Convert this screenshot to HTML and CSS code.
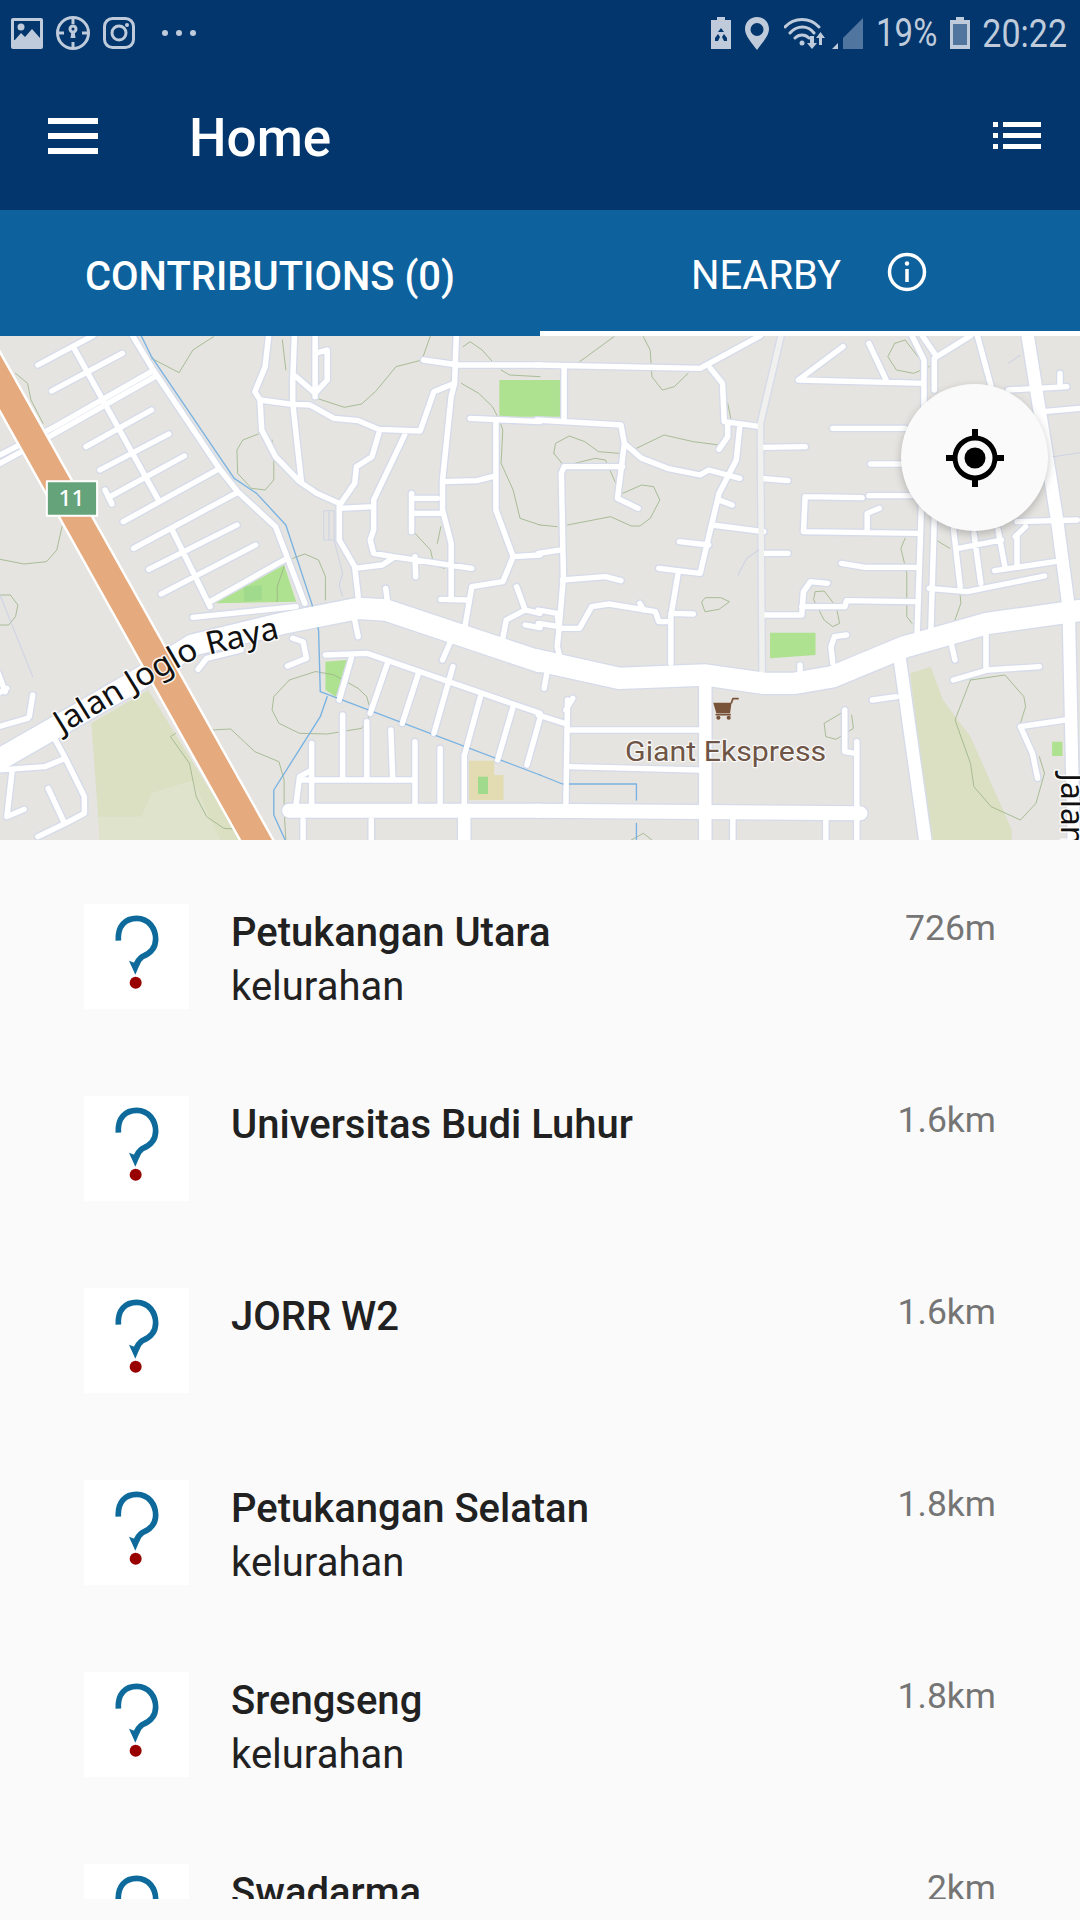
FILE: index.html
```html
<!DOCTYPE html>
<html lang="id">
<head>
<meta charset="utf-8">
<title>Home</title>
<link rel="stylesheet" href="styles.css">
</head>
<body>
<svg class="defs" width="0" height="0" aria-hidden="true">
  <symbol id="q" viewBox="0 0 315 315">
    <path class="q-arc" d="M103 110C100 65 125 43 158 43C195 43 215 75 215 105C215 135 195 150 175 158C165 165 160 172 156 185"/>
    <path class="q-head" d="M154 212L135 170L153 177L175 163Z"/>
    <circle class="q-dot" cx="155" cy="236" r="18"/>
  </symbol>
</svg>

<header class="appbar">
  <div class="status">
    <div class="status-left">
      <svg class="st" width="32" height="31" viewBox="0 0 32 31"><rect class="st-fill" x="0" y="0" width="32" height="31" rx="2"/><rect class="st-cut" x="3" y="3" width="26" height="19"/><circle class="st-fill" cx="10" cy="9" r="3.5"/><path class="st-fill" d="M3 23L10 15L14 19L21 11L29 20V27H3Z"/></svg>
      <svg class="st" width="34" height="34" viewBox="0 0 34 34"><circle class="st-line" cx="17" cy="17" r="15.5"/><path class="st-line" d="M17 1V8M17 26V33M1 17H8M26 17H33"/><circle class="st-line" cx="17" cy="13" r="3"/><path class="st-fill" d="M15.5 15H18.5L19.5 22H14.5Z"/></svg>
      <svg class="st" width="32" height="32" viewBox="0 0 32 32"><rect class="st-line" x="1.5" y="1.5" width="29" height="29" rx="8"/><circle class="st-line" cx="16" cy="16" r="7"/><circle class="st-fill" cx="24" cy="8" r="2"/></svg>
      <div class="dots"><i></i><i></i><i></i></div>
    </div>
    <div class="status-right">
      <svg class="st" width="22" height="32" viewBox="0 0 22 32"><path class="st-fill" d="M7 0H15V3H21V32H1V3H7Z"/><path class="st-dark" d="M11 11L14 15H8ZM5 21L8 17L10 20L8 24H5ZM17 21L14 17L12 20L14 24H17Z"/></svg>
      <svg class="st st-pin" width="24" height="33" viewBox="0 0 24 33"><path class="st-fill" fill-rule="evenodd" d="M12 0C5 0 0 5 0 12C0 19 7 26 12 33C17 26 24 19 24 12C24 5 19 0 12 0ZM12 6A6.500 6.500 0 1 1 12 19A6.500 6.500 0 1 1 12 6Z"/></svg>
      <svg class="st st-wifi" width="42" height="33" viewBox="0 0 42 33"><path class="st-line st-thin" d="M1 10C10 0 26 0 35 10M6 16C13 8 24 8 30 16M11 21C15 17 21 17 25 21"/><circle class="st-fill" cx="18" cy="26" r="2.500"/><path class="st-fill" d="M26 19H30V26H33L28 32L23 26H26ZM35 28H38V21H41L36.500 15L32 21H35Z"/></svg>
      <svg class="st st-sig" width="32" height="32" viewBox="0 0 32 32"><path class="st-fill" d="M0 32L6 26V32Z"/><path class="st-dim" d="M11 32V21L31 1V32Z"/></svg>
      <span class="pct">19%</span>
      <svg class="st st-bat" width="22" height="32" viewBox="0 0 22 32"><path class="st-fill" d="M7 0H15V3H21V32H1V3H7Z"/><rect class="st-dim" x="4" y="7" width="14" height="21"/></svg>
      <span class="clock">20:22</span>
    </div>
  </div>
  <div class="toolbar">
    <div class="burger"><i></i><i></i><i></i></div>
    <h1 class="title">Home</h1>
    <svg class="listicon" width="48" height="28" viewBox="0 0 48 28"><path d="M0 0H5V5H0ZM10 0H48V5H10ZM0 11H5V16H0ZM10 11H48V16H10ZM0 22H5V27H0ZM10 22H48V27H10Z"/></svg>
  </div>
</header>

<nav class="tabs">
  <div class="tab">CONTRIBUTIONS (0)</div>
  <div class="tab tab-active">NEARBY
    <svg class="info" width="40" height="40" viewBox="0 0 40 40"><circle cx="20" cy="20" r="17.500"/><path d="M20 17V30"/><circle class="info-dot" cx="20" cy="11.500" r="2.200"/></svg>
  </div>
</nav>

<section class="map">
  <svg class="mapsvg" viewBox="0 18 3136 1512" preserveAspectRatio="none">
    <defs>
      <g id="thin">
        <path d="M385 17L445 120L640 420L690 485L800 590L885 820M110 105L270 17M150 183L355 70M0 375L160 290L440 125M0 400L160 310L450 140M250 350L440 240M290 420L490 312M320 500L535 378M358 575L630 420M388 655L690 487M432 718L688 585M468 792L742 645M610 815L825 690M215 55L460 510M500 600L610 830M305 480L325 522"/>
        <path d="M780 17L770 110L740 185L755 210L760 300L800 380L870 455L920 490L985 520L985 630L1030 710L1040 800M855 17L850 150L850 220L875 455M915 17V200M915 190L860 140M915 70L950 60V150L915 190M755 210L840 222L900 225L970 265L1040 272L1100 298L1220 303L1260 185L1320 160L1325 17M1230 90L1330 105H1568M1365 265L1568 275M1320 160L1310 200L1285 450V540L1310 640V800M1285 455L1385 452L1430 440M1440 280V540L1490 680L1568 675M1490 680L1460 755L1370 770L1350 890M1100 310L1080 380L1035 410L1030 460L990 520M1175 315L1085 510V600L1075 630L1085 670L1140 680L1370 715M985 535L1085 530M1195 490V605M1195 505H1270M1195 550H1285M1030 715L1110 705L1140 685M1205 680L1207 740M1120 775L1125 815M1280 808L1360 810M1500 770L1525 840L1470 870L1460 925M1525 840L1568 850M1525 885L1568 893M1030 870L1040 920M1310 930L1285 990"/>
        <path d="M945 975L1065 970L1568 1150M1020 985L985 1110M1125 1000L1075 1150M1215 1030L1168 1180M1315 1010L1260 1210M1395 1100L1350 1270M1490 1130L1445 1290M1568 1165L1530 1305M995 1155V1340M1065 1175V1340M1135 1200L1140 1340M1205 1235V1420M1278 1255V1420M1348 1275V1420M905 1240V1420M860 1420L870 1340L905 1320M870 1350H1205M1078 1470V1530M880 1470V1530M560 862L860 830M850 925L880 935L890 985L835 1008M575 1018L600 985L700 960"/>
        <path d="M-5 1320L130 1310L190 1285M150 1210L190 1285L245 1400V1450L190 1480L110 1520M140 1375L185 1475M35 1325L20 1460L70 1438M95 1095L85 1160M-5 1190L80 1165M-5 1090L20 1075M-5 1030L15 1085"/>
        <g transform="translate(1568 0)">
          <path d="M-10 105L465 115L640 17M70 115V265M-10 270L235 285L245 340L225 505L285 535M250 345L295 385L370 415L465 435L490 420L580 445M495 115L530 160L535 275L640 290M545 285V320L520 358M580 290L570 390L520 490L490 620L465 730L345 715M520 510L558 525M500 585L650 605M405 635L490 645M70 410H240M70 410L62 430L68 740L55 900L50 950L60 990M-5 670L60 660M65 750L190 740L235 752M400 735L380 860V1000M-5 840L50 850L55 895H115L150 830L200 822L335 845L345 875H380M380 850L445 852M290 820L300 840M-5 880L55 890"/>
          <path d="M640 352L770 350M640 445L720 452M645 670H720M645 855H760L765 785L785 755L835 760M760 830H885L890 812L1090 815M880 50L750 150L1115 160M955 40L1005 150M1080 17L1115 90V300L1095 910M1145 85V180M1145 85L1250 17M1145 560L1135 900M1110 17L1145 70M850 295H1060M960 402H1060M770 500L935 503M770 500L765 605L1095 610M955 497H1085M985 535L950 550V600M875 700L945 712H1090M1130 775L1240 785L1465 738M1200 590L1220 770M1260 610L1280 760M1330 600L1350 710M1385 620V705M1320 722L1495 695M1215 655L1340 630M1410 590L1380 620M1270 17L1310 170M1360 180L1530 170M1510 130V170M1460 245L1568 235M1385 575L1560 570"/>
          <path d="M75 1430L80 1110M95 1105L75 1140M-5 1155L70 1180M80 1200H460M85 1310L460 1320M920 1235V1530M885 1140V1265L915 1270M965 1110L1035 1100M560 1470V1530M830 1470V1530M1195 945L1205 990M1295 900V1020M1200 1050L1300 1020L1450 1010M1395 1190L1525 1170M1395 1190L1430 1270L1445 1345M850 1000L845 950L855 920L890 915M755 1005V1030M20 1030L12 1075"/>
        </g>
      </g>
      <g id="soft">
        <path transform="translate(1568 0)" d="M700 17L640 280L645 1030"/>
      </g>
      <g id="mid">
        <path d="M1348 1460V1540"/>
        <g transform="translate(1568 0)">
          <path d="M480 1040V1540M1045 990L1120 1540M1415 10L1500 560L1535 830L1550 1540"/>
        </g>
      </g>
      <g id="wide2">
        <path d="M840 1442H1568"/>
        <path transform="translate(1568 0)" d="M-10 1442L930 1450"/>
      </g>
      <g id="wide">
        <path d="M-30 1305L190 1175L400 1050L560 945L820 880L1040 835L1120 840L1568 995"/>
        <path transform="translate(1568 0)" d="M-10 990L230 1045L480 1035L650 1060L740 1060L850 1040L1060 950L1300 880L1580 840"/>
      </g>
    </defs>

    <rect class="land" x="0" y="0" width="3136" height="1600"/>

    <path class="park" d="M265 1180L430 1080L700 1530H290Z"/>
    <path class="park-dark" d="M285 1460L410 1460L440 1390L560 1350L640 1530H290Z"/>
    <path class="grass" d="M1450 150H1568V260H1450ZM625 820L825 705L860 815ZM945 995L1010 990L975 1100L945 1080Z"/>
    <path class="grass-dark" d="M708 770L760 765V810L708 815Z"/>
    <path class="tan" d="M1362 1292H1435V1335H1462V1410H1362Z"/>
    <path class="grass-dark" d="M1388 1340H1417V1392H1388Z"/>
    <g transform="translate(1568 0)">
      <path class="park" d="M1075 1030L1135 1010L1170 1110L1250 1220L1370 1500V1530H1130Z"/>
      <path class="grass" d="M-5 150H58V260H-5ZM668 908H800V975L668 985ZM1487 1235H1517V1278H1487Z"/>
    </g>

    <g class="contour">
      <path d="M440 85L520 128L560 60L620 20M750 312L705 330L688 360L690 430L730 475L770 480L795 450V395L790 330M820 30L830 120M920 205L1000 232L1050 222L1090 185L1150 110L1225 90L1250 17M1340 160L1390 190L1430 230L1450 270L1460 300L1455 400L1490 480L1510 565L1568 585M1345 50L1365 35L1400 60L1430 95M1455 120L1480 135L1568 140M850 685L885 672L925 690L945 740V810M825 710L805 770V815M45 130L80 160L90 210L125 280M180 590L165 660L135 695L70 702L0 688M0 795H30L52 825L45 860L25 885H0"/>
      <path d="M915 1025L840 1050L795 1100L790 1140L810 1180L870 1210L950 1212L1050 1195L1078 1150L1065 1100L1040 1075L970 1035ZM510 1210L495 1220L550 1300L570 1400L600 1460L650 1495L680 1497M615 1200L670 1197L740 1265L810 1295L825 1350V1440L830 1530M1205 610L1250 660L1260 705L1290 715M1280 590L1270 640"/>
      <g transform="translate(1568 0)">
        <path d="M115 95L215 20M300 20L320 60L325 140L355 180L390 170L430 130M40 370L45 340L85 318L130 335L170 365L230 370L280 355L360 315L445 335L520 345M40 370L70 408L160 385L190 390L220 460M240 490L295 465L330 470L348 510L320 565L290 588H265L205 560L80 585M0 585L50 590M470 815L480 803H525L550 815L520 838L480 845ZM800 785L825 783L860 830L870 880L850 890L825 870L795 810ZM1060 625L1048 655L1065 730V860L1080 880M1150 630L1190 655M1220 795L1222 820L1205 870M1250 1050L1205 1170L1250 1300L1260 1370L1310 1430L1395 1470L1440 1420L1465 1330L1450 1280M1250 1050L1350 1035L1405 1100L1410 1130L1395 1180M890 1140L825 1180L830 1220L860 1228L910 1195L905 1155M1030 40L1060 30L1105 90M1030 40L1010 80L1035 120L1085 130L1130 110M545 220L555 270M265 1530L300 1510L325 1530"/>
      </g>
    </g>

    <use href="#thin" class="case thin-case"/>
    <use href="#soft" class="case thin-case"/>
    <use href="#mid" class="case mid-case"/>
    <use href="#wide2" class="case wide2-case"/>
    <use href="#wide" class="case wide-case"/>

    <g class="water">
      <path d="M410 17L440 80L680 445L745 490L830 585L905 820L925 900L930 1085L1568 1335M950 1100L930 1160L795 1380V1455L828 1530"/>
      <path transform="translate(1568 0)" d="M0 1335L65 1362H280V1410M280 1480V1530"/>
    </g>

    <use href="#thin" class="road thin-road"/>
    <use href="#soft" class="soft thin-road"/>
    <use href="#mid" class="road mid-road"/>
    <use href="#wide2" class="road wide2-road"/>
    <use href="#wide" class="road wide-road"/>

    <path class="hair" d="M0 795L95 1040M970 630L995 730L985 765L995 800"/>
    <rect class="rail" x="940" y="542" width="30" height="88"/>
    <path class="hair" d="M955 545V628"/>
    <path class="hair" transform="translate(1568 0)" d="M575 735L600 685L635 660M1360 100L1395 75M1490 380L1568 368"/>

    <path class="hw-case" d="M-50 63L800 1631"/>
    <path class="hw" d="M-50 63L800 1631"/>

    <rect class="shield" x="136" y="454" width="146" height="103"/>
    <text class="shield-text" x="208" y="527">11</text>

    <path id="labelpath" class="nofill" d="M180 1212L415 1072L575 982L845 917"/>
    <text class="label"><textPath href="#labelpath">Jalan Joglo Raya</textPath></text>

    <g transform="translate(1568 0)">
      <path class="cart" d="M503 1118H556L552 1150H512Z"/>
      <path class="cart-line" d="M512 1154H552M556 1118L560 1106H575"/>
      <circle class="cart" cx="518" cy="1163" r="6"/>
      <circle class="cart" cx="548" cy="1163" r="6"/>
      <text class="poi" x="247" y="1292" textLength="584" lengthAdjust="spacingAndGlyphs">Giant Ekspress</text>
      <text class="label" transform="translate(1512 1330) rotate(90)">Jalan</text>
    </g>
  </svg>
  <button class="locate" type="button" aria-label="Locate">
    <svg width="58" height="58" viewBox="0 0 58 58"><circle class="loc-ring" cx="29" cy="29" r="20"/><circle class="loc-dot" cx="29" cy="29" r="10.500"/><path class="loc-tick" d="M29 0V8M29 50V58M0 29H8M50 29H58"/></svg>
  </button>
</section>

<main class="list">
  <article class="row">
    <svg class="thumb"><use href="#q"/></svg>
    <div class="body"><div class="name">Petukangan Utara</div><div class="kind">kelurahan</div></div>
    <div class="dist">726m</div>
  </article>
  <article class="row">
    <svg class="thumb"><use href="#q"/></svg>
    <div class="body"><div class="name">Universitas Budi Luhur</div></div>
    <div class="dist">1.6km</div>
  </article>
  <article class="row">
    <svg class="thumb"><use href="#q"/></svg>
    <div class="body"><div class="name">JORR W2</div></div>
    <div class="dist">1.6km</div>
  </article>
  <article class="row">
    <svg class="thumb"><use href="#q"/></svg>
    <div class="body"><div class="name">Petukangan Selatan</div><div class="kind">kelurahan</div></div>
    <div class="dist">1.8km</div>
  </article>
  <article class="row">
    <svg class="thumb"><use href="#q"/></svg>
    <div class="body"><div class="name">Srengseng</div><div class="kind">kelurahan</div></div>
    <div class="dist">1.8km</div>
  </article>
  <article class="row">
    <svg class="thumb"><use href="#q"/></svg>
    <div class="body"><div class="name">Swadarma</div></div>
    <div class="dist">2km</div>
  </article>
</main>
</body>
</html>
```
FILE: styles.css
```css
* { box-sizing: border-box; }
html, body { margin: 0; padding: 0; }
body {
  width: 1080px;
  height: 1920px;
  overflow: hidden;
  background: #fafafa;
  font-family: Roboto, "Liberation Sans", sans-serif;
}
.defs { position: absolute; }

/* App bar */
.appbar { height: 210px; background: #02366c; display: flex; flex-direction: column; }
.status { height: 66px; display: flex; justify-content: space-between; align-items: center; padding: 0 13px 0 11px; }
.status-left, .status-right { display: flex; align-items: center; }
.status-left { gap: 13px; }
.st { display: block; flex: none; }
.st-fill { fill: #bfcbdb; }
.st-cut { fill: #02366c; }
.st-dark { fill: #02366c; }
.st-dim { fill: #50759f; }
.st-line { fill: none; stroke: #bfcbdb; stroke-width: 3; }
.st-thin { stroke-width: 3; stroke-linecap: round; }
.dots { display: flex; gap: 8px; margin-left: 14px; }
.dots i { width: 6px; height: 6px; border-radius: 50%; background: #bfcbdb; }
.st-pin { margin-left: 13px; }
.st-wifi { margin-left: 15px; }
.st-sig { margin-left: 6px; }
.pct, .clock { color: #bfcbdb; font-weight: 400; line-height: 36px; }
.pct { margin-left: 12px; font-size: 33px; transform: scaleY(1.2); }
.st-bat { margin-left: 12px; }
.clock { margin-left: 11px; font-size: 34px; transform: scaleY(1.14); }

.toolbar { flex: 1; display: flex; align-items: center; padding: 0 39px 4px 48px; }
.burger { width: 50px; display: flex; flex-direction: column; gap: 9px; }
.burger i { display: block; height: 6px; background: #fff; }
.title { margin: 4px 0 0 91px; flex: 1; color: #fff; font-size: 53px; font-weight: 500; line-height: 60px; }
.listicon { fill: #fff; }

/* Tabs */
.tabs { height: 126px; background: #0d619d; display: flex; }
.tab { flex: 0 0 540px; display: flex; align-items: center; justify-content: center; color: #fff; font-size: 40px; font-weight: 500; padding-top: 7px; }
.tab-active { font-weight: 400; border-bottom: 5px solid #fff; padding: 9px 2px 0 0; gap: 46px; }
.info { fill: none; stroke: #fff; stroke-width: 3.5; margin-top: -6px; }
.info-dot { fill: #fff; stroke: none; }

/* Map */
.map { position: relative; height: 504px; overflow: hidden; background: #e5e4e1; }
.mapsvg { display: block; width: 1080px; height: 504px; fill: none; stroke-linecap: round; stroke-linejoin: round; }
.land { fill: #e5e4e1; }
.park { fill: #dbe0c3; }
.park-dark { fill: #dfe3cb; }
.grass { fill: #aee290; }
.grass-dark { fill: #a0da8c; }
.tan { fill: #e3dbb1; }
.contour { fill: none; stroke: #9cb487; stroke-width: 2.5; }
.water { fill: none; stroke: #7ab3e2; stroke-width: 4; }
.case { stroke: #d6dbe9; }
.road { stroke: #fff; }
.soft { stroke: #f0f0ee; }
.thin-case { stroke-width: 24; }
.thin-road { stroke-width: 16; }
.mid-case { stroke-width: 44; }
.mid-road { stroke-width: 36; }
.wide2-case { stroke-width: 50; }
.wide2-road { stroke-width: 42; }
.wide-case { stroke-width: 72; }
.wide-road { stroke-width: 64; }
.hair { fill: none; stroke: #cdd3e4; stroke-width: 3; }
.rail { fill: #e5e4e1; stroke: #cdd3e4; stroke-width: 3; }
.hw-case { stroke: #fff; stroke-width: 92; stroke-linecap: butt; }
.hw { stroke: #e5aa7e; stroke-width: 78; stroke-linecap: butt; }
.shield { fill: #65a37a; stroke: #fff; stroke-width: 6; }
.shield-text { fill: #fff; font-family: "Noto Sans", sans-serif; font-size: 66px; font-weight: 500; text-anchor: middle; }
.nofill { fill: none; }
.label { fill: #111; font-family: "Noto Sans", sans-serif; font-size: 95px; stroke: #fff; stroke-width: 9; paint-order: stroke; stroke-opacity: .85; }
.poi { fill: #6f5546; font-family: Roboto, sans-serif; font-size: 84px; stroke: #fff; stroke-width: 7; paint-order: stroke; stroke-opacity: .8; }
.cart { fill: #795339; }
.cart-line { fill: none; stroke: #795339; stroke-width: 5; }

.locate {
  position: absolute;
  left: 901px;
  top: 48px;
  width: 147px;
  height: 147px;
  padding: 0;
  border: 0;
  border-radius: 50%;
  background: #fafafa;
  box-shadow: 0 3px 8px rgba(0, 0, 0, .22);
  display: flex;
  align-items: center;
  justify-content: center;
}
.loc-ring { fill: none; stroke: #000; stroke-width: 5; }
.loc-dot { fill: #000; }
.loc-tick { fill: none; stroke: #000; stroke-width: 6; }

/* List */
.list { height: 1059px; overflow: hidden; background: #fafafa; padding-top: 64px; }
.row { height: 192px; padding: 0 84px; display: flex; align-items: flex-start; }
.thumb { width: 105px; height: 105px; background: #fff; flex: none; }
.q-arc { fill: none; stroke: #0e6a9b; stroke-width: 17; }
.q-head { fill: #0e6a9b; }
.q-dot { fill: #990000; }
.body { flex: 1; margin-left: 42px; padding-top: 2px; color: #212121; }
.name { font-size: 40px; font-weight: 500; line-height: 54px; }
.kind { font-size: 40px; line-height: 54px; }
.dist { margin-top: 4px; color: #757575; font-size: 35.5px; line-height: 41px; }
```
